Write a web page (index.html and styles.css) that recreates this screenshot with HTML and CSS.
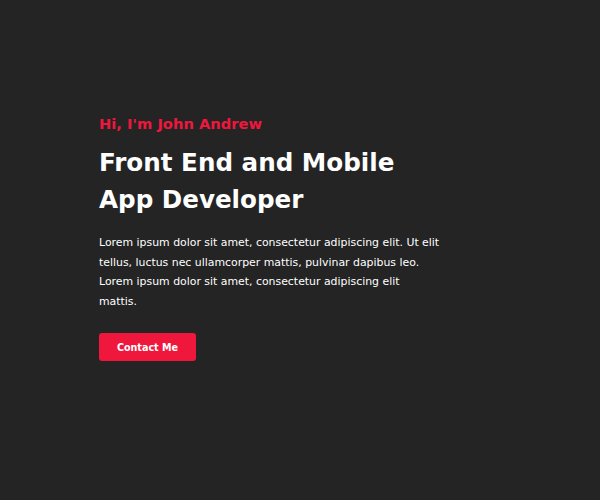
FILE: index.html
```html
<!DOCTYPE html>
<html>
<head>
<meta charset="utf-8">
<link rel="stylesheet" href="styles.css">
</head>
<body>
<section class="hero">
  <div class="hero-inner">
    <p class="greeting">Hi, I'm John Andrew</p>
    <h1 class="title">Front End and Mobile App Developer</h1>
    <p class="intro">Lorem ipsum dolor sit amet, consectetur adipiscing elit. Ut elit tellus, luctus nec ullamcorper mattis, pulvinar dapibus leo. Lorem ipsum dolor sit amet, consectetur adipiscing elit mattis.</p>
    <a class="btn" href="#">Contact Me</a>
  </div>
</section>
</body>
</html>
```

FILE: styles.css
```css
html, body {
  margin: 0;
  padding: 0;
  background: #242424;
}
body {
  font-family: "DejaVu Sans", "Open Sans", sans-serif;
  width: 600px;
  height: 500px;
}
.hero {
  padding: 114px 0 0 99px;
}
.hero-inner {
  width: 345px;
  display: flex;
  flex-direction: column;
  align-items: flex-start;
}
.greeting {
  margin: 0;
  color: #f0173d;
  font-size: 14.7px;
  font-weight: bold;
  line-height: 20px;
}
.title {
  margin: 10px 0 0;
  color: #ffffff;
  font-size: 24.6px;
  font-weight: bold;
  line-height: 37px;
}
.intro {
  margin: 15px 0 0;
  width: 341px;
  color: #ffffff;
  font-size: 10.9px;
  line-height: 19.6px;
}
.btn {
  margin-top: 22px;
  width: 97px;
  height: 28px;
  display: flex;
  align-items: center;
  justify-content: center;
  background: #f0173d;
  color: #fff;
  border-radius: 3px;
  font-size: 9.6px;
  font-weight: bold;
  text-decoration: none;
}
```
